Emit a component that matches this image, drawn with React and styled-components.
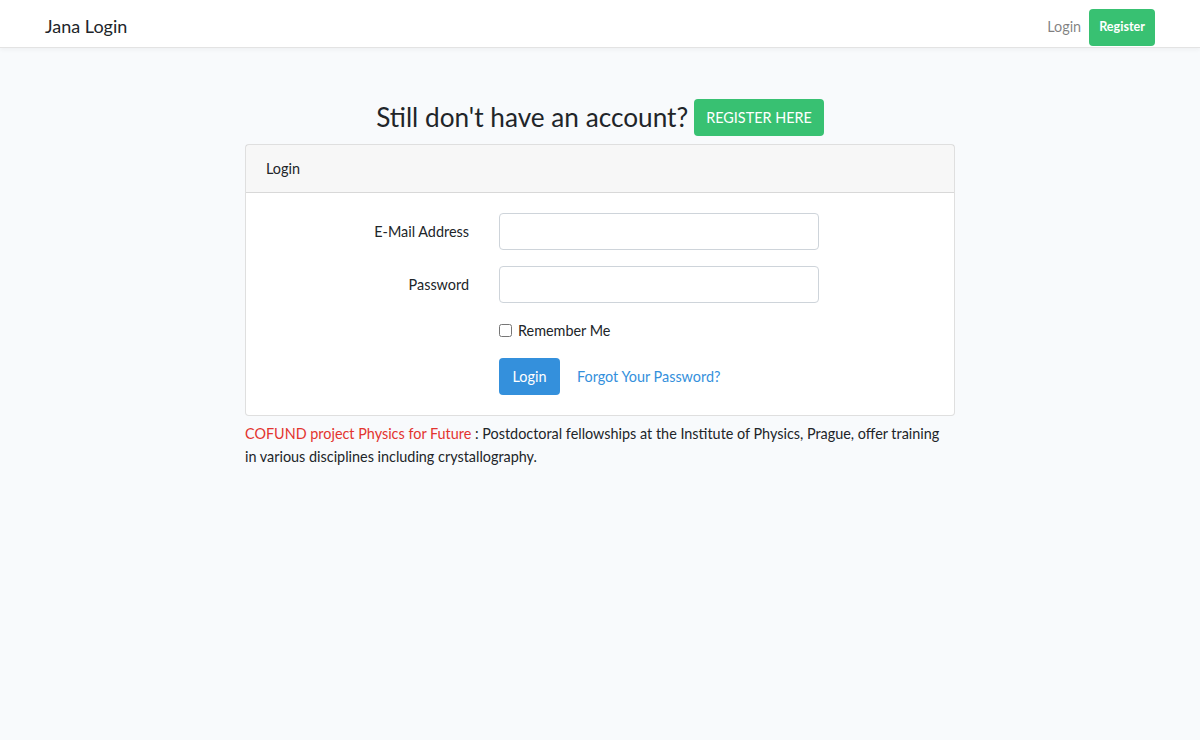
import React from "react";
import styled, { createGlobalStyle } from "styled-components";

const GlobalStyle = createGlobalStyle`
  * { box-sizing: border-box; }
  body {
    margin: 0;
    background-color: #f8fafc;
    color: #212529;
    font-family: Lato, "Noto Sans", sans-serif;
    font-size: 14.4px;
    line-height: 1.6;
  }
`;

const Navbar = styled.nav`
  background: #fff;
  height: 48px;
  padding-top: 7px;
  border-bottom: 1px solid #e3e3e3;
  box-shadow: 0 0.125rem 0.25rem rgba(0, 0, 0, 0.04);
`;

const NavInner = styled.div`
  width: 1140px;
  margin: 0 auto;
  padding: 0 15px;
  height: 100%;
  display: flex;
  align-items: center;
  justify-content: space-between;
`;

const Brand = styled.a`
  font-size: 18px;
  color: #212529;
  text-decoration: none;
  padding-bottom: 1px;
`;

const NavLinks = styled.div`
  display: flex;
  align-items: center;
  gap: 8px;
`;

const NavLink = styled.a`
  color: rgba(0, 0, 0, 0.5);
  text-decoration: none;
  font-size: 14.4px;
`;

const Button = styled.a`
  display: inline-flex;
  align-items: center;
  justify-content: center;
  height: ${(p) => p.$h || 37}px;
  padding: 0 ${(p) => p.$px || 12}px;
  border-radius: 4px;
  background: ${(p) => p.$bg};
  color: #fff;
  font-size: ${(p) => p.$fs || 14.4}px;
  font-weight: ${(p) => p.$fw || 400};
  text-decoration: none;
  cursor: pointer;
`;

const Main = styled.main`
  padding-top: 24px;
  display: flex;
  flex-direction: column;
  align-items: center;
`;

const Heading = styled.div`
  margin-top: 27px;
  display: flex;
  align-items: center;
  gap: 6px;
  margin-bottom: 8px;
`;

const HeadingText = styled.h3`
  margin: 0;
  font-size: 26.2px;
  font-weight: 400;
  line-height: 1.2;
`;

const Card = styled.div`
  width: 710px;
  background: #fff;
  border: 1px solid rgba(0, 0, 0, 0.125);
  border-radius: 4px;
`;

const CardHeader = styled.div`
  background: rgba(0, 0, 0, 0.03);
  border-bottom: 1px solid rgba(0, 0, 0, 0.125);
  padding: 12px 20px;
`;

const CardBody = styled.div`
  padding: 20px 20px 4px;
`;

const Row = styled.div`
  display: grid;
  grid-template-columns: 203px 320px;
  column-gap: 30px;
  align-items: center;
  margin-bottom: 16px;
`;

const Label = styled.label`
  text-align: right;
`;

const Input = styled.input`
  width: 320px;
  height: 37px;
  border: 1px solid #ced4da;
  border-radius: 4px;
  background: #fff;
  padding: 6px 12px;
  font: inherit;
`;

const CheckLabel = styled.label`
  display: flex;
  align-items: center;
  gap: 6px;
  grid-column: 2;
  & input {
    margin: 0;
    width: 13px;
    height: 13px;
  }
`;

const Actions = styled.div`
  grid-column: 2;
  display: flex;
  align-items: center;
  gap: 17px;
`;

const LinkText = styled.a`
  color: #3490dc;
  text-decoration: none;
`;

const Footer = styled.p`
  width: 710px;
  margin: 6px 0 0;
  padding-right: 6px;
`;

const Red = styled.span`
  color: #e3342f;
`;

export default function App() {
  return (
    <>
      <GlobalStyle />
      <Navbar>
        <NavInner>
          <Brand href="#">Jana Login</Brand>
          <NavLinks>
            <NavLink href="#">Login</NavLink>
            <Button $bg="#38c172" $h={37} $px={10} $fs={12.6} $fw={700}>
              Register
            </Button>
          </NavLinks>
        </NavInner>
      </Navbar>
      <Main>
        <Heading>
          <HeadingText>Still don't have an account?</HeadingText>
          <Button $bg="#38c172">REGISTER HERE</Button>
        </Heading>
        <Card>
          <CardHeader>Login</CardHeader>
          <CardBody>
            <Row>
              <Label>E-Mail Address</Label>
              <Input type="email" />
            </Row>
            <Row>
              <Label>Password</Label>
              <Input type="password" />
            </Row>
            <Row>
              <CheckLabel>
                <input type="checkbox" />
                Remember Me
              </CheckLabel>
            </Row>
            <Row>
              <Actions>
                <Button $bg="#3490dc" $px={13.5}>Login</Button>
                <LinkText href="#">Forgot Your Password?</LinkText>
              </Actions>
            </Row>
          </CardBody>
        </Card>
        <Footer>
          <Red>COFUND project Physics for Future</Red> : Postdoctoral fellowships at
          the Institute of Physics, Prague, offer training in various disciplines
          including crystallography.
        </Footer>
      </Main>
    </>
  );
}
